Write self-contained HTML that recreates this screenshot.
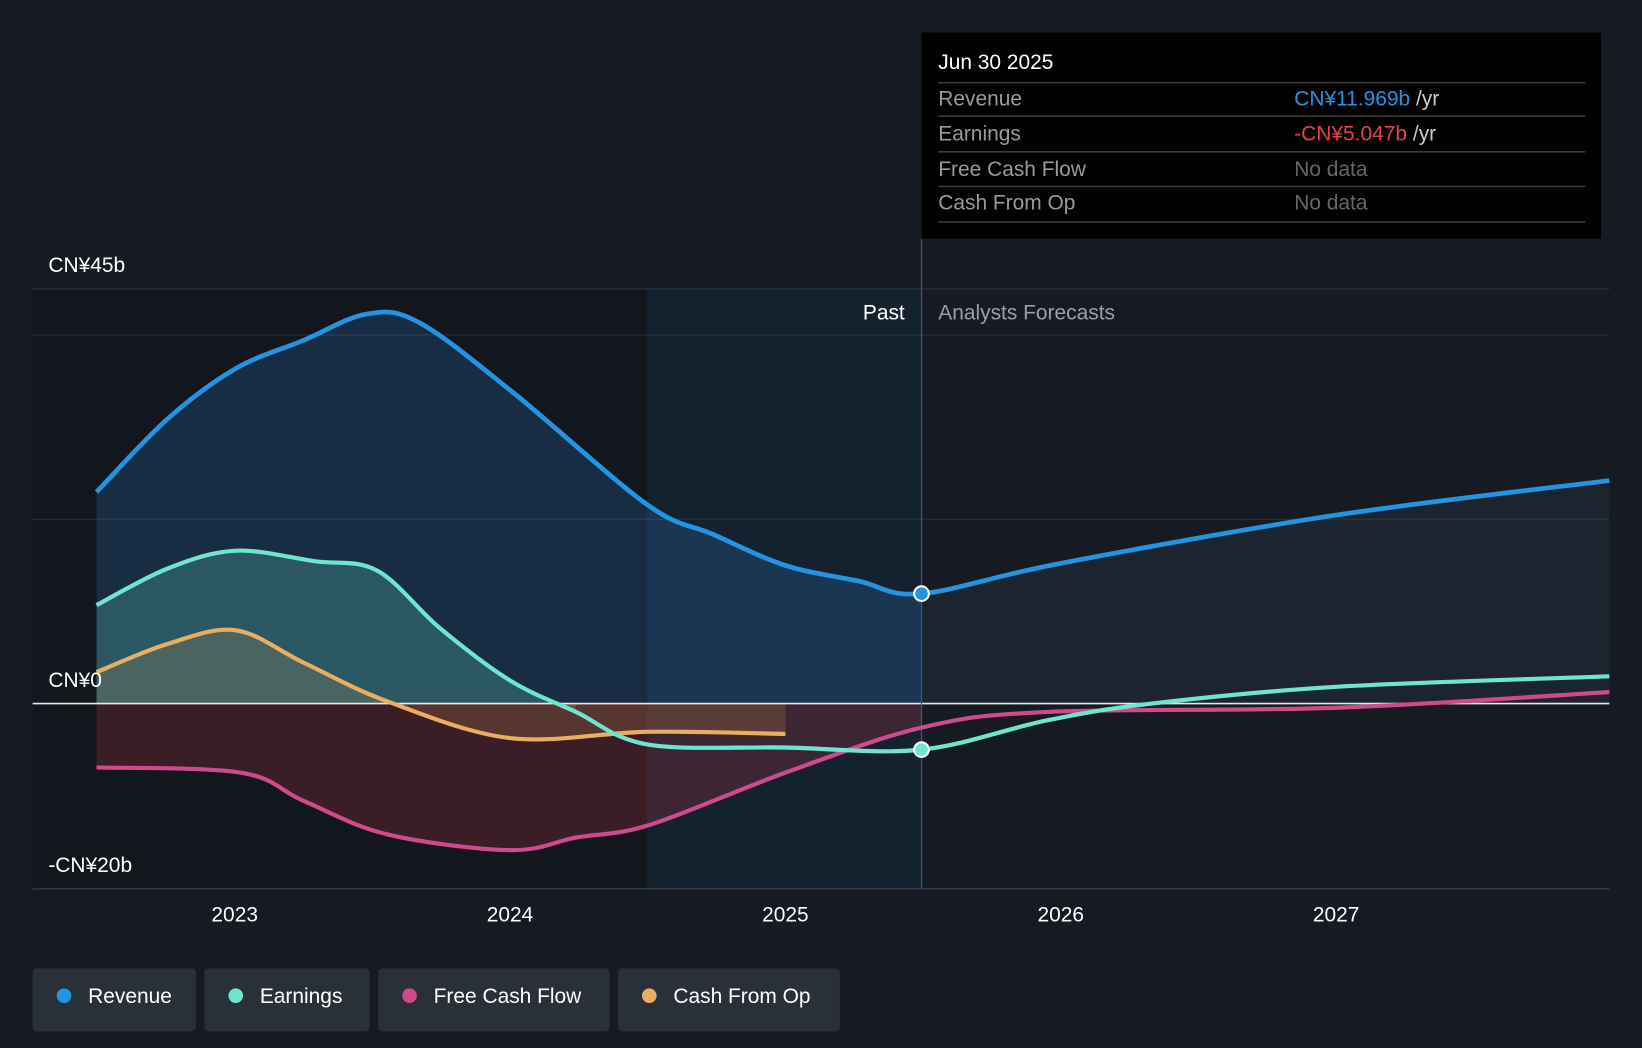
<!DOCTYPE html>
<html><head><meta charset="utf-8"><style>
html,body{margin:0;padding:0;background:#151a23;overflow:hidden}
svg{display:block}
text{font-family:"Liberation Sans",sans-serif}
</style></head><body>
<svg width="1642" height="1048" viewBox="0 0 1568 1001" xmlns="http://www.w3.org/2000/svg">
<defs>
<linearGradient id="rg" gradientUnits="userSpaceOnUse" x1="0" y1="0" x2="1568" y2="0">
<stop offset="0" stop-color="#2a6fb5" stop-opacity="0.26"/>
<stop offset="0.561" stop-color="#2a6fb5" stop-opacity="0.26"/>
<stop offset="0.562" stop-color="#4a6a8a" stop-opacity="0.12"/>
<stop offset="1" stop-color="#4a6a8a" stop-opacity="0.12"/>
</linearGradient>
</defs>
<rect width="1568" height="1001" fill="#151a23"/>
<rect x="31" y="276" width="587" height="573" fill="#12161d"/>
<rect x="618" y="276" width="262" height="573" fill="#14222f"/>
<g stroke="#2c3440" stroke-width="1">
<line x1="31" y1="276" x2="1537" y2="276"/>
<line x1="31" y1="320" x2="1537" y2="320"/>
<line x1="31" y1="496" x2="1537" y2="496"/>
<line x1="31" y1="849" x2="1537" y2="849" stroke="#444c58"/>
</g>
<path id="revFill" fill="url(#rg)"/>
<path id="earnFill" fill="#5fd6c0" fill-opacity="0.25"/>
<path id="fcfFill" fill="#b8323f" fill-opacity="0.25"/>
<path id="cfoFill" fill="#e0a85a" fill-opacity="0.18"/>
<line x1="31" y1="672" x2="1537" y2="672" stroke="#e8e8e8" stroke-width="1.5"/>
<line x1="880" y1="228" x2="880" y2="849" stroke="#2e5d80" stroke-width="1.2"/>
<path id="fcf" fill="none" stroke="#cf4a8c" stroke-width="4"/>
<path id="cfo" fill="none" stroke="#e9ae62" stroke-width="4"/>
<path id="earn" fill="none" stroke="#6ee6cf" stroke-width="4"/>
<path id="rev" fill="none" stroke="#2394e2" stroke-width="4.5"/>
<circle cx="880" cy="567" r="7" fill="#2394e2" stroke="#fff" stroke-width="2"/>
<circle cx="880" cy="716" r="7" fill="#6ee6cf" stroke="#fff" stroke-width="2"/>
<g font-size="20">
<text x="46" y="260" fill="#fff">CN¥45b</text>
<text x="46" y="656" fill="#fff">CN¥0</text>
<text x="46" y="833" fill="#fff">-CN¥20b</text>
<text x="864" y="305" fill="#fff" text-anchor="end">Past</text>
<text x="896" y="305" fill="#9aa0a8">Analysts Forecasts</text>
</g>
<g fill="#fff" font-size="20" text-anchor="middle">
<text x="224" y="880">2023</text><text x="487" y="880">2024</text><text x="750" y="880">2025</text><text x="1013" y="880">2026</text><text x="1276" y="880">2027</text>
</g>
<rect x="880" y="31" width="649" height="197" fill="#000"/>
<text x="896" y="66" fill="#fff" font-size="20">Jun 30 2025</text>
<g stroke="#3a3a3a" stroke-width="1.5">
<line x1="896" y1="79" x2="1514" y2="79"/><line x1="896" y1="111" x2="1514" y2="111"/><line x1="896" y1="145" x2="1514" y2="145"/><line x1="896" y1="178" x2="1514" y2="178"/><line x1="896" y1="212" x2="1514" y2="212"/>
</g>
<g font-size="20" fill="#9a9a9a">
<text x="896" y="101">Revenue</text><text x="896" y="134">Earnings</text><text x="896" y="168">Free Cash Flow</text><text x="896" y="200">Cash From Op</text>
<text x="1236" y="101"><tspan fill="#2394e2">CN¥11.969b</tspan> <tspan fill="#ccc">/yr</tspan></text>
<text x="1236" y="134"><tspan fill="#e8414a">-CN¥5.047b</tspan> <tspan fill="#ccc">/yr</tspan></text>
<text x="1236" y="168" fill="#666">No data</text><text x="1236" y="200" fill="#666">No data</text>
</g>
<g font-size="20" fill="#fff">
<rect x="31" y="925" width="156" height="60" rx="4" fill="#2a303a"/><circle cx="61" cy="951" r="7" fill="#2394e2"/><text x="84" y="958">Revenue</text>
<rect x="195" y="925" width="158" height="60" rx="4" fill="#2a303a"/><circle cx="225" cy="951" r="7" fill="#6ee6cf"/><text x="248" y="958">Earnings</text>
<rect x="361" y="925" width="221" height="60" rx="4" fill="#2a303a"/><circle cx="391" cy="951" r="7" fill="#cf4a8c"/><text x="414" y="958">Free Cash Flow</text>
<rect x="590" y="925" width="212" height="60" rx="4" fill="#2a303a"/><circle cx="620" cy="951" r="7" fill="#e9ae62"/><text x="643" y="958">Cash From Op</text>
</g>
</svg>
<script>
function cr(p){let d="M"+p[0][0]+","+p[0][1];for(let i=0;i<p.length-1;i++){const a=p[i-1]||p[i],b=p[i],c=p[i+1],e=p[i+2]||c;d+=" C"+(b[0]+(c[0]-a[0])/6)+","+(b[1]+(c[1]-a[1])/6)+" "+(c[0]-(e[0]-b[0])/6)+","+(c[1]-(e[1]-b[1])/6)+" "+c[0]+","+c[1];}return d;}
const rev=[[92,470],[160,400],[225,352],[290,325],[350,300],[400,308],[490,375],[618,482],[680,510],[750,540],[820,555],[880,567],[1013,538],[1276,492],[1537,459]];
const earn=[[92,578],[160,543],[225,526],[300,536],[360,545],[420,600],[487,650],[550,680],[618,711],[750,714],[880,716],[1000,688],[1100,672],[1276,656],[1537,646]];
const fcf=[[92,733],[230,738],[290,765],[370,797],[487,812],[550,800],[620,788],[750,738],[880,695],[1000,680],[1276,676],[1537,661]];
const cfo=[[92,642],[160,615],[225,602],[290,633],[370,670],[487,705],[618,699],[750,701]];
function set(id,d){document.getElementById(id).setAttribute("d",d);}
set("rev",cr(rev));set("earn",cr(earn));set("fcf",cr(fcf));set("cfo",cr(cfo));
function fill(p){return cr(p)+" L"+p[p.length-1][0]+",672 L"+p[0][0]+",672 Z";}
set("revFill",fill(rev));set("earnFill",fill(earn.slice(0,8)));set("fcfFill",fill(fcf.slice(0,9)));set("cfoFill",fill(cfo));
</script>
</body></html>
